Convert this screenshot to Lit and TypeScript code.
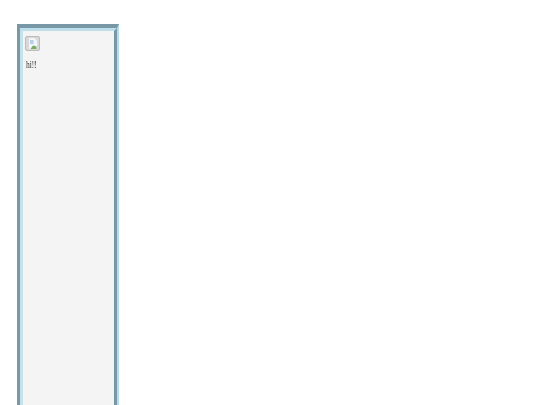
import { LitElement, html, css } from "lit";
import { customElement } from "lit/decorators.js";

@customElement("app-root")
export class AppRoot extends LitElement {
  static styles = css`
    :host { display: block; width: 540px; height: 405px; overflow: hidden; background: #fff; }
    .page { padding: 24px 0 0 17px; }
    .outer { width: 102px; height: 420px; box-sizing: border-box; border-style: solid; border-width: 4px 2px 0 3px; border-color: #7898a6 #b7dce9 #7898a6 #7898a6; }
    .inner { height: 100%; box-sizing: border-box; border-style: solid; border-width: 3px 3px 0 3px; border-color: #bcdfea #7898a6 #bcdfea #c3e2ec; background: #f4f4f4; padding: 5px 0 0 2px; }
    .thumb { width: 15px; height: 15px; box-sizing: border-box; border: 1px solid #bcbcbc; border-radius: 2px; background: #d8d8d8; display: flex; align-items: center; justify-content: center; }
    .thumb svg { display: block; }
    .msg { margin: 8px 0 0 1px; font: 11px/11px "Liberation Serif", serif; color: #000; transform: scaleX(0.66); transform-origin: left center; will-change: transform; }
  `;
  render() {
    return html`<div class="page"><div class="outer"><div class="inner">
      <div class="thumb"><svg width="8" height="11" viewBox="0 0 8 11">
        <path d="M0 0H5.5L8 2.5V11H0Z" fill="#f2f5fa"/>
        <path d="M1 2H4.5V6H1Z" fill="#b4cdec"/>
        <path d="M1.5 11L4 7.5L7.5 8.5V11Z" fill="#74ad60"/>
      </svg></div>
      <div class="msg">hi!!</div>
    </div></div></div>`;
  }
}
